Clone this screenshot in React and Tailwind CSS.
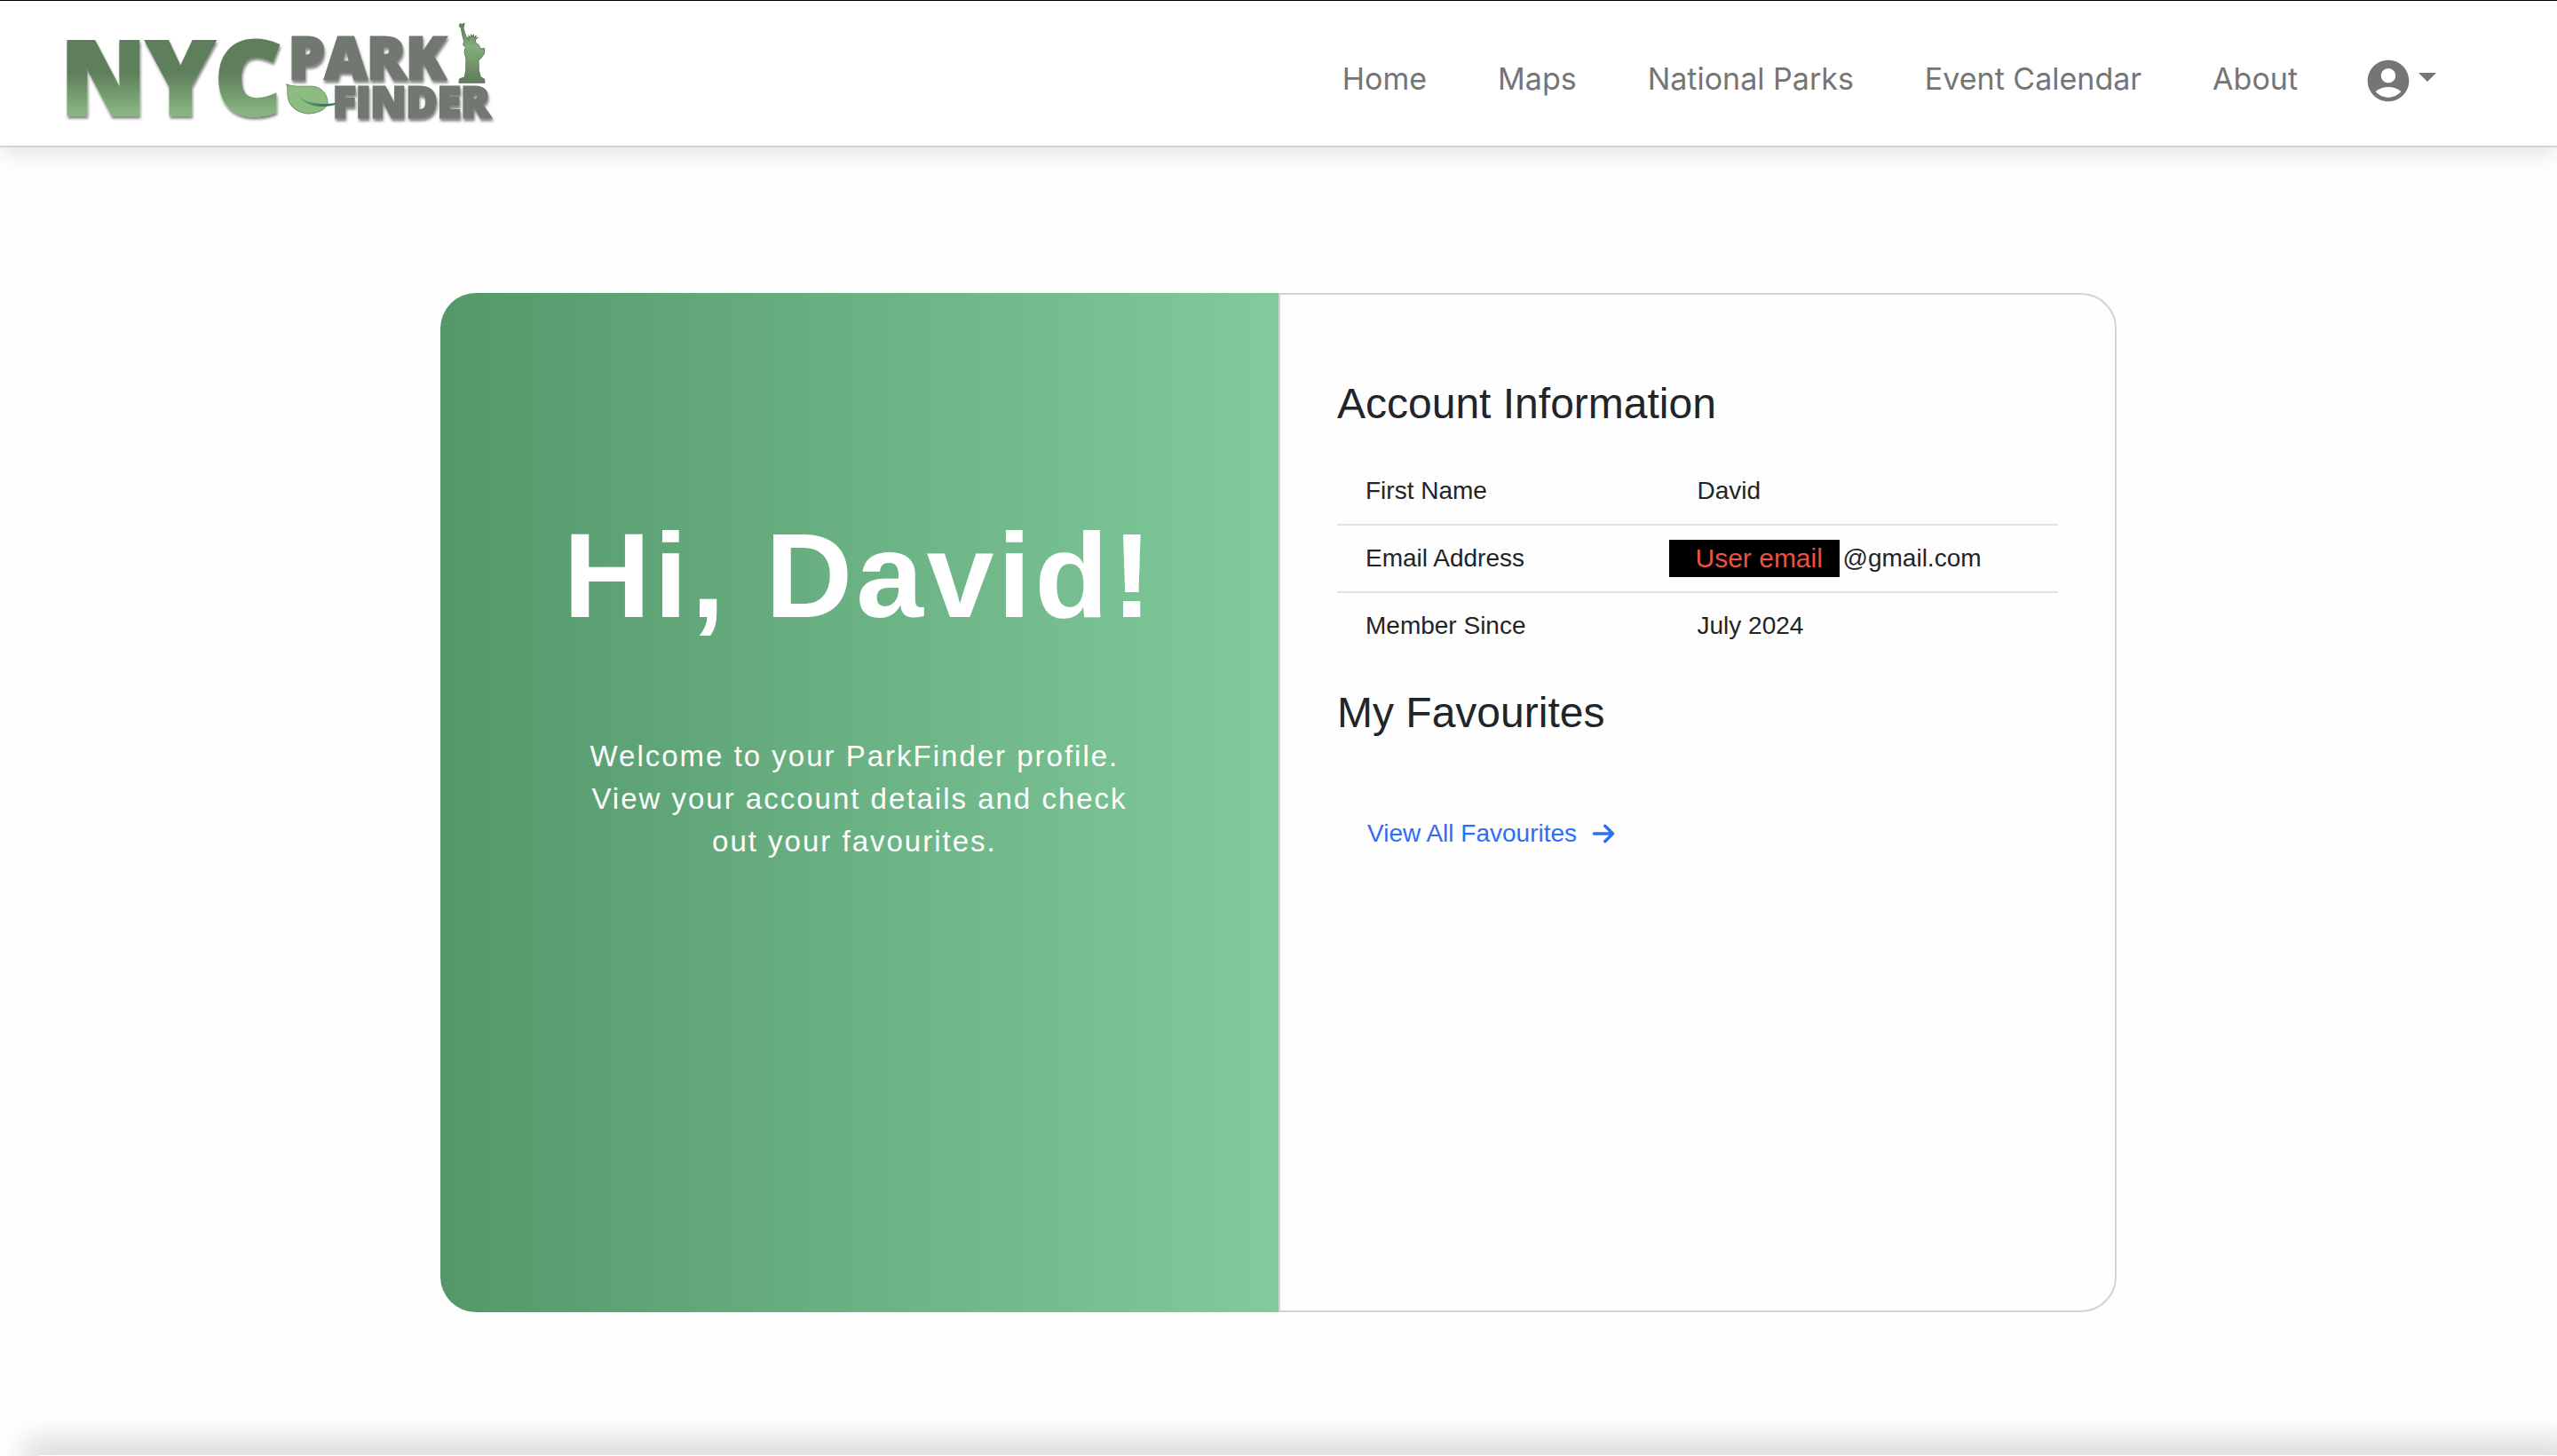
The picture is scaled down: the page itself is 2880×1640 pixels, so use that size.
import { MdAccountCircle } from "react-icons/md";
import { FaArrowRight } from "react-icons/fa6";

const links = ["Home", "Maps", "National Parks", "Event Calendar", "About"];

function Logo() {
  return (
    <svg viewBox="0 0 500 132" className="h-[132px] w-[500px] overflow-visible" role="img" aria-label="NYC Park Finder">
      <defs>
        <linearGradient id="nyc" gradientUnits="userSpaceOnUse" x1="0" y1="27" x2="0" y2="113">
          <stop offset="0.45" stopColor="#5f7f5c" />
          <stop offset="0.95" stopColor="#86b47f" />
        </linearGradient>
        <linearGradient id="statue" x1="0" y1="0" x2="0" y2="1">
          <stop offset="0" stopColor="#5f7a5c" />
          <stop offset="0.4" stopColor="#84ae7b" />
          <stop offset="1" stopColor="#5f7a5c" />
        </linearGradient>
        <linearGradient id="vein" x1="0" y1="0" x2="1" y2="0">
          <stop offset="0" stopColor="#6db58a" />
          <stop offset="0.6" stopColor="#40785c" />
        </linearGradient>
        <filter id="drop" x="-5%" y="-10%" width="110%" height="130%">
          <feDropShadow dx="1" dy="3" stdDeviation="1.5" floodColor="#000" floodOpacity="0.5" />
        </filter>
      </defs>
      <g filter="url(#drop)" fontFamily="'Open Sans', sans-serif" fontWeight="800">
        <text x="4" y="112" fontSize="116" fill="url(#nyc)" stroke="url(#nyc)" strokeWidth="3">NYC</text>
        <text x="261" y="72" fontSize="65" fill="#70786f" stroke="#70786f" strokeWidth="3">PARK</text>
        <text x="311" y="115" fontSize="48" fill="#70786f" stroke="#70786f" strokeWidth="3">FINDER</text>
      </g>
      <g transform="translate(246 -7) scale(0.3333)">
        <path
          d="M38 254 C62 266 95 260 128 262 C160 266 177 290 177 318 C172 342 142 354 108 354 C62 348 42 318 42 290 C42 274 42 264 38 254Z"
          fill="#8dbb80"
          stroke="#6b8f66"
          strokeWidth="3"
        />
        <path d="M75 292 C105 318 140 326 202 318 L203 324 C150 338 100 328 75 292Z" fill="url(#vein)" />
      </g>
      <path
        transform="translate(436 -1) scale(0.3333)"
        d="M54 32 L62 34 L69 30 L68 38 L66 46 L70 62 L76 78 L86 90 L79 78 L87 82 L83 71 L91 79 L92 68 L96 77 L101 68 L101 79 L109 72 L105 82 L115 78 L106 87 L108 98 L118 104 L124 117 L137 115 L136 134 L126 148 L117 156 L118 190 L124 212 L137 219 L138 232 L51 232 L52 219 L70 212 L74 190 L75 150 L69 128 L73 112 L65 104 L68 92 L61 66 L58 46 L52 42Z"
        fill="url(#statue)"
        stroke="#5f7a5c"
        strokeWidth="3"
        strokeLinejoin="round"
      />
    </svg>
  );
}

export default function App() {
  return (
    <div className="flex min-h-screen flex-col overflow-hidden bg-[#fefefe] font-['Liberation_Sans',sans-serif] text-[#212529]">
      <header className="flex h-[166px] items-center justify-between border-t border-b-2 border-t-black border-b-[#d3d3d3] bg-white pr-[136px] pl-16 shadow-[0_8px_24px_-2px_rgba(0,0,0,0.12)]">
        <a href="#home"><Logo /></a>
        <nav className="flex items-center gap-[74px] pt-4 font-['Inter',sans-serif] text-[34px] text-[#757575]">
          <div className="flex gap-20 pb-1">
            {links.map((l) => (
              <a key={l} href="#nav">{l}</a>
            ))}
          </div>
          <button type="button" aria-label="Account menu" className="flex items-center gap-1.5">
            <MdAccountCircle className="size-14" />
            <span className="mb-2 border-x-10 border-t-10 border-x-transparent border-t-[#757575]" />
          </button>
        </nav>
      </header>
      <main className="flex grow justify-center px-8 pt-[164px]">
        <div className="flex min-h-[1148px] w-full max-w-[1888px] self-start">
          <section className="flex w-1/2 flex-col items-center rounded-l-[40px] bg-linear-90 from-[#54986a] to-[#81cb9d] pt-[238px] text-center text-white">
            <h1 className="text-[136px] leading-[160px] font-bold tracking-[4px]">Hi, David!</h1>
            <p className="mt-[100px] w-[640px] text-[33px] leading-[48px] tracking-[2px]">
              Welcome to your ParkFinder profile.&nbsp;
              <br />
              View your account details and check out your favourites.&nbsp;
            </p>
          </section>
          <section className="w-1/2 rounded-r-[40px] border-2 border-[#d3d3d3] px-16 pt-[94px]">
            <h2 className="text-5xl leading-[58px]">Account Information</h2>
            <table className="mt-8 w-full text-left text-[28px] leading-[42px]">
              <tbody>
                <tr className="border-b-2 border-[#dee2e6]">
                  <th scope="row" className="w-[46%] px-8 py-4 font-normal">First Name</th>
                  <td className="px-8 py-4">David</td>
                </tr>
                <tr className="border-b-2 border-[#dee2e6]">
                  <th scope="row" className="px-8 py-4 font-normal">Email Address</th>
                  <td className="py-4">
                    <div className="flex items-center gap-1">
                      <span className="w-48 bg-black pl-[30px] text-[30px] text-[#ec5141]">User email</span>
                      <span>@gmail.com</span>
                    </div>
                  </td>
                </tr>
                <tr>
                  <th scope="row" className="px-8 py-4 font-normal">Member Since</th>
                  <td className="px-8 py-4">July 2024</td>
                </tr>
              </tbody>
            </table>
            <h2 className="mt-8 text-5xl leading-[58px]">My Favourites</h2>
            <a href="#favourites" className="mt-[86px] ml-[34px] inline-flex items-center gap-4 text-[28px] leading-[42px] text-[#2f6df6]">
              View All Favourites <FaArrowRight className="size-7" />
            </a>
          </section>
        </div>
      </main>
      <footer className="ml-11 h-px shadow-[0_0_32px_16px_rgba(0,0,0,0.16)]" />
    </div>
  );
}
